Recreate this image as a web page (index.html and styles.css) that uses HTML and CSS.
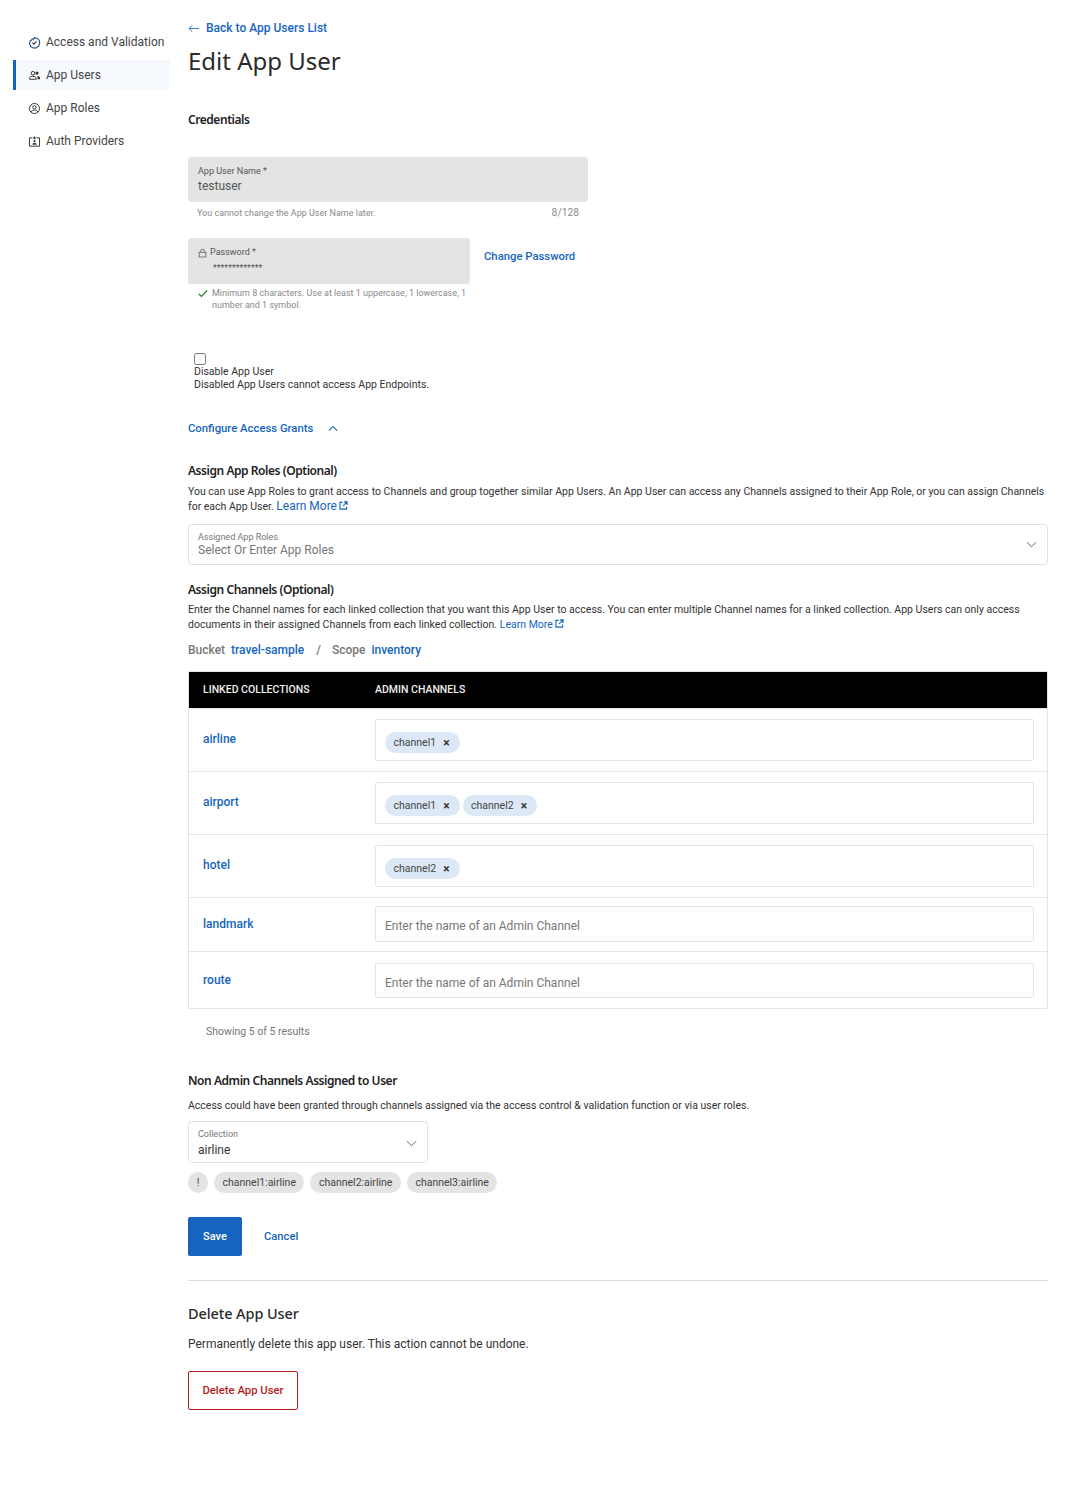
FILE: index.html
```html
<!DOCTYPE html>
<html>
<head>
  <title>Edit App User</title>
  <meta name="viewport" content="width=device-width, initial-scale=1.0">
  <link rel="stylesheet" href="styles.css">
</head>
<body>
  <div class="page">
    <nav class="sidebar">
      <a class="nav-item">
        <svg class="nav-icon" viewBox="0 0 16 16"><path d="M8 1.8l1.600 1 1.900-.1.900 1.600 1.600 1-.1 1.900.6 1.800-1 1.600-.2 1.900-1.800.7-1.200 1.500-1.900-.3-1.800.6-1.400-1.300-1.900-.5-.4-1.900-1.200-1.500.8-1.700-.1-1.900 1.700-.9 1-1.600 1.900.1z" fill="none" stroke="#1a4f8a" stroke-width="1.3"/><path d="M5.500 8.200l1.800 1.800 3.300-3.500" fill="none" stroke="#333" stroke-width="1.3"/></svg>
        Access and Validation
      </a>
      <a class="nav-item active">
        <svg class="nav-icon" viewBox="0 0 16 16"><circle cx="6" cy="5.200" r="2.200" fill="none" stroke="#333" stroke-width="1.2"/><path d="M1.800 12.600v-1c0-1.700 2-2.600 4.200-2.600s4.200.9 4.200 2.600v1z" fill="none" stroke="#333" stroke-width="1.2"/><circle cx="11" cy="5" r="2" fill="#333"/><path d="M11.500 8.500c2 .1 3.300 1 3.300 2.500v1.600h-3v-1.500c0-1-.2-1.800-.3-2.600z" fill="#333"/></svg>
        App Users
      </a>
      <a class="nav-item">
        <svg class="nav-icon" viewBox="0 0 16 16"><circle cx="8" cy="8" r="6.200" fill="none" stroke="#333" stroke-width="1.2"/><circle cx="8" cy="6.500" r="2.100" fill="none" stroke="#333" stroke-width="1.2"/><path d="M4 12.200c.6-1.500 2.200-2.200 4-2.200s3.400.7 4 2.200" fill="none" stroke="#333" stroke-width="1.2"/></svg>
        App Roles
      </a>
      <a class="nav-item">
        <svg class="nav-icon" viewBox="0 0 16 16"><path d="M5.500 3.500H1.800v10.300h12.400V3.500h-3.700" fill="none" stroke="#333" stroke-width="1.2"/><rect x="6.800" y="2" width="2.400" height="3" fill="#333"/><circle cx="8" cy="7.500" r="1.300" fill="#333"/><path d="M5.500 12c0-1.500 1-2.500 2.500-2.500s2.500 1 2.500 2.500z" fill="#333"/></svg>
        Auth Providers
      </a>
    </nav>

    <main class="content">
      <a class="back-link">
        <svg class="back-arrow" viewBox="0 0 14 10"><path d="M13 5H1.500M5 1.200L1.200 5 5 8.800" fill="none" stroke="#1565c0" stroke-width="1"/></svg>
        Back to App Users List
      </a>
      <h1>Edit App User</h1>
      <h3 class="credentials-title">Credentials</h3>

      <div class="filled-field name-field">
        <div class="field-label">App User Name *</div>
        <div class="field-value">testuser</div>
      </div>
      <div class="field-hint name-hint">
        <span>You cannot change the App User Name later.</span>
        <span class="counter">8/128</span>
      </div>

      <div class="password-row">
        <div class="password-col">
          <div class="filled-field password-field">
            <div class="field-label">
              <svg class="lock" viewBox="0 0 12 12"><rect x="1.500" y="5" width="9" height="6.300" fill="none" stroke="#555" stroke-width="1"/><path d="M3.500 5V3.500a2.500 2.500 0 015 0V5" fill="none" stroke="#555" stroke-width="1"/></svg>
              Password *
            </div>
            <div class="password-dots">*************</div>
          </div>
          <div class="password-hint">
            <svg class="check" viewBox="0 0 12 10"><path d="M1 5.500l3.200 3L11 1.200" fill="none" stroke="#2e7d32" stroke-width="1.600"/></svg>
            <span>Minimum 8 characters. Use at least 1 uppercase, 1 lowercase, 1 number and 1 symbol.</span>
          </div>
        </div>
        <a class="change-password">Change Password</a>
      </div>

      <div class="disable-block">
        <input type="checkbox" class="disable-check">
        <div>Disable App User</div>
        <div>Disabled App Users cannot access App Endpoints.</div>
      </div>

      <a class="configure-link">
        Configure Access Grants
        <svg class="chevron-up" viewBox="0 0 12 8"><path d="M1 6.500L6 1.500l5 5" fill="none" stroke="#1565c0" stroke-width="1.300"/></svg>
      </a>

      <h3 class="roles-title">Assign App Roles (Optional)</h3>
      <div class="desc roles-desc">
        <div>You can use App Roles to grant access to Channels and group together similar App Users. An App User can access any Channels assigned to their App Role, or you can assign Channels</div>
        <div>for each App User. <a class="learn-more big">Learn More<svg class="ext" viewBox="0 0 10 10"><path d="M4 1.500H1v7.500h7.500V6M5.500 1H9v3.500M9 1L4.500 5.500" fill="none" stroke="#1565c0" stroke-width="1.200"/></svg></a></div>
      </div>

      <div class="select-box roles-select">
        <div>
          <div class="select-label">Assigned App Roles</div>
          <div class="select-placeholder">Select Or Enter App Roles</div>
        </div>
        <svg class="chevron-down" viewBox="0 0 12 7"><path d="M1 1l5 5 5-5" fill="none" stroke="#555" stroke-width="1"/></svg>
      </div>

      <h3 class="channels-title">Assign Channels (Optional)</h3>
      <div class="desc channels-desc">
        <div>Enter the Channel names for each linked collection that you want this App User to access. You can enter multiple Channel names for a linked collection. App Users can only access</div>
        <div>documents in their assigned Channels from each linked collection. <a class="learn-more">Learn More<svg class="ext" viewBox="0 0 10 10"><path d="M4 1.500H1v7.500h7.500V6M5.500 1H9v3.500M9 1L4.500 5.500" fill="none" stroke="#1565c0" stroke-width="1.200"/></svg></a></div>
      </div>

      <div class="scope-line">
        <span class="muted">Bucket</span><a>travel-sample</a>
        <span class="slash">/</span>
        <span class="muted">Scope</span><a>inventory</a>
      </div>

      <div class="table">
        <div class="table-head">
          <div class="col-name">LINKED COLLECTIONS</div>
          <div>ADMIN CHANNELS</div>
        </div>
        <div class="table-row chips-row">
          <a class="col-name">airline</a>
          <div class="chips-input">
            <span class="chip">channel1 <b class="chip-x">&#215;</b></span>
          </div>
        </div>
        <div class="table-row chips-row">
          <a class="col-name">airport</a>
          <div class="chips-input">
            <span class="chip">channel1 <b class="chip-x">&#215;</b></span>
            <span class="chip">channel2 <b class="chip-x">&#215;</b></span>
          </div>
        </div>
        <div class="table-row chips-row">
          <a class="col-name">hotel</a>
          <div class="chips-input">
            <span class="chip">channel2 <b class="chip-x">&#215;</b></span>
          </div>
        </div>
        <div class="table-row text-row">
          <a class="col-name">landmark</a>
          <div class="text-input">Enter the name of an Admin Channel</div>
        </div>
        <div class="table-row text-row last">
          <a class="col-name">route</a>
          <div class="text-input">Enter the name of an Admin Channel</div>
        </div>
      </div>
      <div class="results">Showing 5 of 5 results</div>

      <h3 class="nonadmin-title">Non Admin Channels Assigned to User</h3>
      <p class="desc nonadmin-desc">Access could have been granted through channels assigned via the access control &amp; validation function or via user roles.</p>

      <div class="select-box collection-select">
        <div>
          <div class="select-label">Collection</div>
          <div class="select-value">airline</div>
        </div>
        <svg class="chevron-down" viewBox="0 0 12 7"><path d="M1 1l5 5 5-5" fill="none" stroke="#555" stroke-width="1"/></svg>
      </div>

      <div class="grey-chips">
        <span class="grey-chip bang">!</span>
        <span class="grey-chip">channel1:airline</span>
        <span class="grey-chip">channel2:airline</span>
        <span class="grey-chip">channel3:airline</span>
      </div>

      <div class="actions">
        <button class="btn-save">Save</button>
        <a class="cancel">Cancel</a>
      </div>

      <hr class="divider">

      <h2 class="delete-title">Delete App User</h2>
      <p class="delete-text">Permanently delete this app user. This action cannot be undone.</p>
      <button class="btn-delete">Delete App User</button>
    </main>
  </div>
</body>
</html>
```

FILE: styles.css
```css
body {
  margin: 0;
  font-family: Roboto, "Liberation Sans", sans-serif;
  color: #2f2f2f;
  background-color: #fff;
  font-size: 11px;
}

a {
  color: #1565c0;
}

.page {
  display: flex;
  min-height: 1501px;
}

/* sidebar */
.sidebar {
  width: 157px;
  margin-left: 13px;
  margin-right: 18px;
  padding-top: 27px;
  flex-shrink: 0;
}

.nav-item {
  display: flex;
  align-items: center;
  gap: 5px;
  height: 30px;
  margin-bottom: 3px;
  padding-left: 12px;
  border-left: 3px solid transparent;
  color: #444;
  font-size: 12px;
  white-space: nowrap;
  box-sizing: border-box;
}

.nav-item.active {
  background-color: #f6f9fe;
  border-left-color: #1565c0;
}

.nav-icon {
  width: 13px;
  height: 13px;
  flex-shrink: 0;
}

/* main column */
.content {
  width: 860px;
}

.back-link {
  display: flex;
  align-items: center;
  gap: 6px;
  height: 16px;
  margin-top: 20px;
  font-size: 12px;
  font-weight: 500;
}

.back-arrow {
  width: 12px;
  height: 9px;
}

h1 {
  margin: 7px 0 0;
  font-family: "Noto Sans", sans-serif;
  font-size: 24px;
  font-weight: 400;
  line-height: 36px;
  color: #2b2b2b;
}

h3 {
  margin: 0;
  font-family: "Noto Sans", sans-serif;
  font-size: 12px;
  font-weight: 600;
  line-height: 16px;
  letter-spacing: -0.45px;
  color: #222;
}

.credentials-title {
  margin-top: 33px;
}

.filled-field {
  background-color: #e4e4e4;
  border-radius: 3px;
  box-sizing: border-box;
}

.name-field {
  width: 400px;
  height: 45px;
  margin-top: 29px;
  padding: 9px 10px 0;
}

.field-label {
  font-size: 9px;
  line-height: 11px;
  color: #555;
  display: flex;
  align-items: center;
  gap: 3px;
}

.field-value {
  margin-top: 2px;
  font-size: 12px;
  line-height: 15px;
  color: #555;
}

.field-hint {
  display: flex;
  justify-content: space-between;
  width: 382px;
  margin-top: 5px;
  padding-left: 9px;
  font-size: 9px;
  line-height: 12px;
  color: #8a8a8a;
}

.counter {
  font-size: 10.3px;
}

.password-row {
  display: flex;
  margin-top: 19px;
}

.password-col {
  width: 282px;
}

.password-field {
  height: 46px;
  padding: 9px 10px 0;
}

.lock {
  width: 9px;
  height: 10px;
}

.password-dots {
  margin-top: 4px;
  padding-left: 15px;
  font-size: 8.8px;
  line-height: 13px;
  color: #555;
}

.password-hint {
  display: flex;
  gap: 4px;
  margin-top: 3px;
  padding-left: 10px;
  font-size: 9px;
  line-height: 12px;
  color: #8a8a8a;
}

.check {
  width: 10px;
  height: 9px;
  margin-top: 2px;
  flex-shrink: 0;
}

.change-password {
  margin: 11px 0 0 14px;
  font-size: 11.3px;
  font-weight: 500;
  line-height: 15px;
}

.disable-block {
  margin-top: 42px;
  padding-left: 6px;
  font-size: 10.5px;
  line-height: 13px;
  color: #333;
}

.disable-check {
  display: block;
  width: 12px;
  height: 12px;
  margin: 0;
}

.configure-link {
  display: flex;
  align-items: center;
  gap: 15px;
  height: 14px;
  margin-top: 30px;
  font-size: 11.3px;
  font-weight: 500;
}

.chevron-up {
  width: 10px;
  height: 7px;
}

.roles-title {
  margin-top: 28px;
}

.desc {
  margin: 0;
  font-size: 10.5px;
  line-height: 15px;
  color: #333;
  white-space: nowrap;
}

.roles-desc {
  margin-top: 5px;
}

.learn-more.big {
  font-size: 12px;
}

.ext {
  width: 9px;
  height: 9px;
  margin-left: 2px;
}

.select-box {
  display: flex;
  align-items: center;
  justify-content: space-between;
  border: 1px solid #e2e2e2;
  border-radius: 4px;
  box-sizing: border-box;
  padding: 0 10px 0 9px;
}

.roles-select {
  height: 41px;
  margin-top: 10px;
}

.select-label {
  font-size: 9px;
  line-height: 11px;
  color: #777;
}

.select-placeholder {
  font-size: 12px;
  line-height: 15px;
  color: #777;
}

.select-value {
  margin-top: 3px;
  font-size: 12px;
  line-height: 15px;
  color: #333;
}

.chevron-down {
  width: 11px;
  height: 7px;
}

.channels-title {
  margin-top: 17px;
}

.channels-desc {
  margin-top: 4px;
}

.scope-line {
  display: flex;
  align-items: center;
  height: 15px;
  margin-top: 10px;
  font-size: 12px;
  font-weight: 500;
}

.scope-line a {
  margin-left: 6px;
}

.muted {
  color: #777;
}

.slash {
  margin: 0 11px 0 12px;
  color: #777;
}

/* table */
.table {
  margin-top: 14px;
  border: 1px solid #e4e4ea;
  border-radius: 2px;
}

.table-head {
  display: flex;
  align-items: center;
  height: 36px;
  padding-bottom: 2px;
  box-sizing: border-box;
  background-color: #000;
  color: #eee;
  font-size: 10.5px;
  font-weight: 500;
}

.col-name {
  width: 186px;
  padding-left: 14px;
  flex-shrink: 0;
  box-sizing: border-box;
}

.table-row {
  display: flex;
  align-items: center;
  padding-right: 13px;
  border-top: 1px solid #e4e4ea;
  font-size: 12px;
  font-weight: 500;
}

.table-row .col-name {
  margin-bottom: 2px;
}

.chips-row {
  height: 62px;
}

.text-row {
  height: 53px;
}

.text-row.last {
  height: 56px;
}

.text-row.last .col-name {
  margin-bottom: 0;
}

.chips-input {
  display: flex;
  align-items: center;
  gap: 3px;
  flex: 1;
  height: 42px;
  padding-left: 9px;
  border: 1px solid #e4e4e4;
  border-radius: 2px;
  box-sizing: border-box;
}

.chip {
  display: flex;
  align-items: center;
  gap: 7px;
  height: 21px;
  margin-top: 5px;
  padding: 0 10px 0 8.5px;
  border-radius: 11px;
  background-color: #dce8f5;
  color: #444;
  font-size: 10.5px;
  font-weight: 400;
}

.chip-x {
  font-size: 12px;
  font-weight: 700;
  color: #333;
}

.text-input {
  flex: 1;
  height: 36px;
  margin-bottom: 1px;
  padding: 12px 9px 0;
  border: 1px solid #e4e4e4;
  border-radius: 2px;
  box-sizing: border-box;
  color: #777;
  font-size: 12px;
  font-weight: 400;
}

.text-row.last .text-input {
  height: 35px;
  margin: 1px 0 0;
}

.results {
  margin-top: 16px;
  padding-left: 18px;
  font-size: 10.5px;
  line-height: 13px;
  color: #777;
}

.nonadmin-title {
  margin-top: 35px;
}

.nonadmin-desc {
  margin-top: 9px;
}

.collection-select {
  width: 240px;
  height: 42px;
  margin-top: 8px;
  padding-top: 2px;
}

.grey-chips {
  display: flex;
  gap: 6px;
  margin-top: 9px;
}

.grey-chip {
  height: 21px;
  padding: 0 8.5px;
  border-radius: 11px;
  background-color: #e4e4e4;
  color: #444;
  font-size: 10.5px;
  line-height: 21px;
}

.grey-chip.bang {
  width: 20px;
  padding: 0;
  text-align: center;
  box-sizing: border-box;
}

.actions {
  display: flex;
  align-items: center;
  gap: 22px;
  margin-top: 24px;
}

.btn-save {
  width: 54px;
  height: 39px;
  border: none;
  border-radius: 2px;
  background-color: #1565c0;
  color: #fff;
  font-family: Roboto, sans-serif;
  font-size: 11px;
  font-weight: 500;
}

.cancel {
  font-size: 11.2px;
  font-weight: 500;
}

.divider {
  margin: 24px 0 0;
  border: none;
  border-top: 1px solid #ddd;
}

.delete-title {
  margin: 21px 0 0;
  font-family: "Noto Sans", sans-serif;
  font-size: 14.5px;
  font-weight: 500;
  line-height: 22px;
  letter-spacing: -0.1px;
  color: #2b2b2b;
}

.delete-text {
  margin: 13px 0 0;
  font-size: 12px;
  line-height: 15px;
  color: #333;
}

.btn-delete {
  display: block;
  width: 110px;
  height: 39px;
  margin-top: 19px;
  border: 1px solid #b71c1c;
  border-radius: 2px;
  background-color: #fff;
  color: #b71c1c;
  font-family: Roboto, sans-serif;
  font-size: 11.3px;
  font-weight: 500;
}
```
